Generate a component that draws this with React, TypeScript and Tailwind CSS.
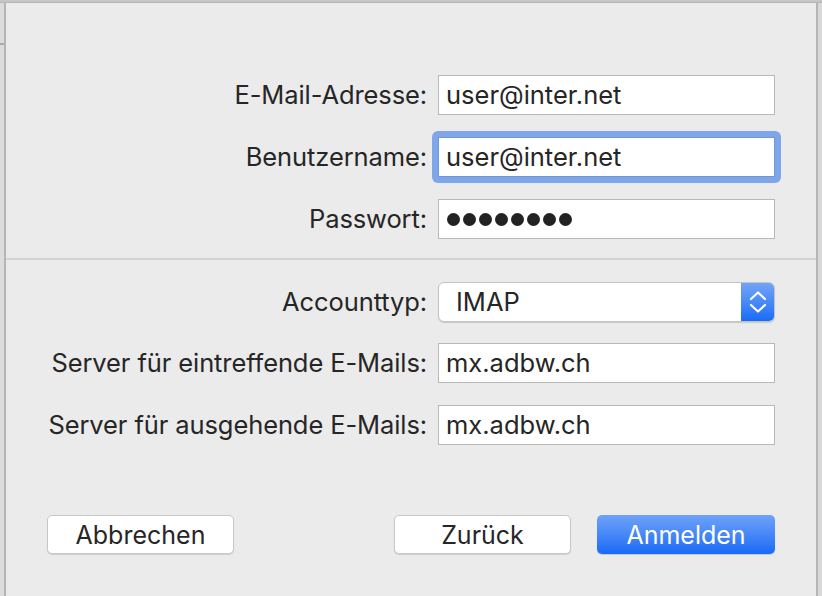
import React from "react";

const font = { fontFamily: "Inter, 'Noto Sans', 'Liberation Sans', sans-serif" };

function Label({ children }: { children: React.ReactNode }) {
  return (
    <div className="w-[432px] pr-[11px] text-right text-[25.5px] leading-none text-[#262626] tracking-[-0.1px]">
      {children}
    </div>
  );
}

function TextBox({ value, focused }: { value: string; focused?: boolean }) {
  if (focused) {
    return (
      <div className="relative">
        <div className="absolute -left-[6px] -top-[6px] -right-[6px] -bottom-[6px] rounded-[6px] bg-[#7ea6e8]" />
        <div className="relative h-[40px] w-[337px] bg-white border border-[#6f97d8] flex items-center pl-[7px] text-[25.5px] text-[#262626] leading-none">
          {value}
        </div>
      </div>
    );
  }
  return (
    <div className="h-[40px] w-[337px] bg-white border border-[#b9b9b9] flex items-center pl-[7px] text-[25.5px] text-[#262626] leading-none">
      {value}
    </div>
  );
}

function Row({ label, children }: { label: string; children: React.ReactNode }) {
  return (
    <div className="flex items-center h-[40px]">
      <Label>{label}</Label>
      {children}
    </div>
  );
}

export default function App() {
  return (
    <div className="w-[822px] h-[596px] bg-[#ebebeb] flex flex-col overflow-hidden" style={font}>
      <div className="h-[3px] bg-[#c6c6c6] border-b border-[#b4b4b4]" />
      <div className="flex flex-1">
        <div className="w-[6px] bg-[#dcdcdc] border-r-2 border-[#b5b5b5] flex flex-col">
          <div className="h-[40px]" />
          <div className="h-[2px] bg-[#a9a9a9]" />
        </div>
        <div className="flex-1 flex flex-col pt-[72px]">
          <div className="flex flex-col gap-[22px]">
            <Row label="E-Mail-Adresse:">
              <TextBox value="user@inter.net" />
            </Row>
            <Row label="Benutzername:">
              <TextBox value="user@inter.net" focused />
            </Row>
            <Row label="Passwort:">
              <div className="h-[40px] w-[337px] bg-white border border-[#b9b9b9] flex items-center pl-[8px] gap-[3px]">
                {Array.from({ length: 8 }).map((_, i) => (
                  <span key={i} className="w-[13px] h-[13px] rounded-full bg-[#222]" />
                ))}
              </div>
            </Row>
          </div>
          <div className="mt-[19px] h-[2px] bg-[#d3d3d3]" />
          <div className="mt-[22px] flex flex-col">
            <Row label="Accounttyp:">
              <div className="h-[40px] w-[337px] rounded-[6px] bg-white border border-[#c4c4c4] shadow-[0_1px_1px_rgba(0,0,0,0.15)] flex overflow-hidden">
                <div className="flex-1 flex items-center pl-[17px] text-[25.5px] text-[#262626] leading-none">IMAP</div>
                <div className="w-[33px] h-full bg-gradient-to-b from-[#72a4f6] to-[#176bf6] flex items-center justify-center">
                  <svg width="18" height="26" viewBox="0 0 18 26" fill="none" stroke="white" strokeWidth="2.2" strokeLinecap="round" strokeLinejoin="round">
                    <path d="M2 10 L9 3.5 L16 10" />
                    <path d="M2 16 L9 22.5 L16 16" />
                  </svg>
                </div>
              </div>
            </Row>
            <div className="h-[21px]" />
            <Row label="Server für eintreffende E-Mails:">
              <TextBox value="mx.adbw.ch" />
            </Row>
            <div className="h-[22px]" />
            <Row label="Server für ausgehende E-Mails:">
              <TextBox value="mx.adbw.ch" />
            </Row>
          </div>
          <div className="mt-[70px] flex items-center pl-[41px] pr-[41px]">
            <button className="h-[39px] w-[187px] rounded-[5px] bg-white border border-[#c8c8c8] shadow-[0_1px_1px_rgba(0,0,0,0.12)] text-[25px] text-[#262626] leading-none pt-[2px]">
              Abbrechen
            </button>
            <div className="flex-1" />
            <button className="h-[39px] w-[177px] rounded-[5px] bg-white border border-[#c8c8c8] shadow-[0_1px_1px_rgba(0,0,0,0.12)] text-[25px] text-[#262626] leading-none pt-[2px]">
              Zurück
            </button>
            <button className="ml-[26px] h-[39px] w-[178px] rounded-[5px] bg-gradient-to-b from-[#6ea2f8] to-[#1769f6] text-[25px] text-white leading-none shadow-[0_1px_1px_rgba(0,0,0,0.15)] pt-[2px]">
              Anmelden
            </button>
          </div>
        </div>
        <div className="w-[6px] bg-[#d8d8d8] border-l-2 border-[#b5b5b5]" />
      </div>
    </div>
  );
}
